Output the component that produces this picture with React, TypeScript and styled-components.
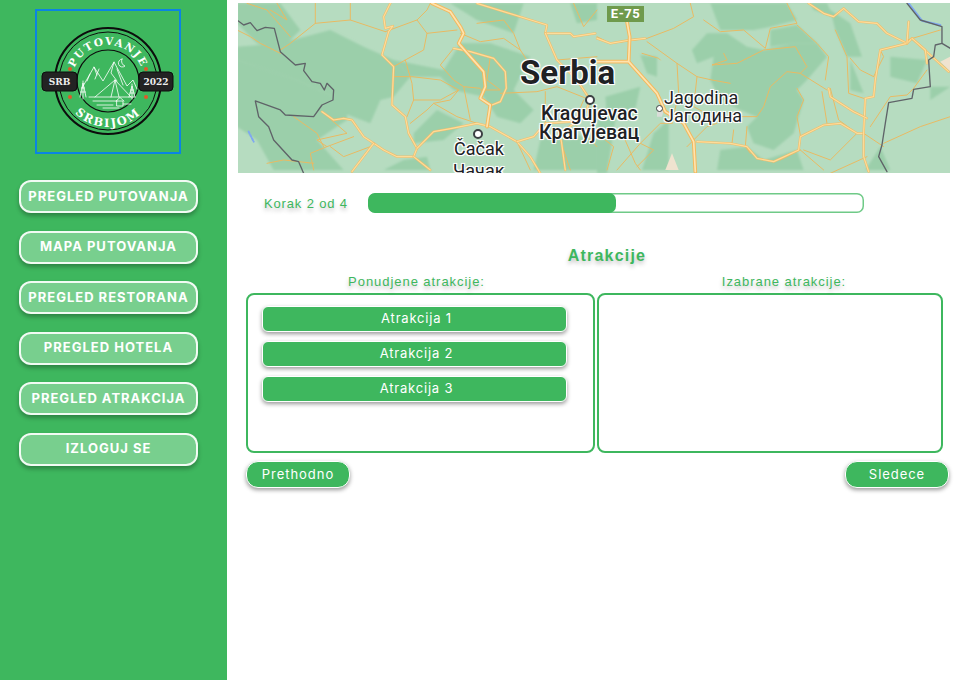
import React from "react";
import styled, { createGlobalStyle } from "styled-components";

const green = "#3eb75e";

const GlobalStyle = createGlobalStyle`
  html, body {
    margin: 0;
    padding: 0;
    background: #fff;
    font-family: Inter, "Liberation Sans", sans-serif;
  }
  * { box-sizing: border-box; }
`;

const Page = styled.div`
  display: flex;
  width: 961px;
  height: 680px;
  overflow: hidden;
`;

const Sidebar = styled.aside`
  width: 227px;
  flex: none;
  background: ${green};
  display: flex;
  flex-direction: column;
  padding: 9px 0 0 19px;
`;

const LogoBox = styled.div`
  width: 146px;
  height: 145px;
  margin: 0 0 26px 16px;
  border: 2px solid #0b84e3;
  svg { display: block; margin: -2px; }
`;

const NavList = styled.nav`
  display: flex;
  flex-direction: column;
  gap: 17.6px;
`;

const NavButton = styled.button`
  width: 179px;
  height: 33px;
  padding: 0 0 2px;
  border: 2px solid rgba(255, 255, 255, 0.9);
  border-radius: 12px;
  background: #78cf8e;
  color: #fff;
  font-family: inherit;
  font-size: 13px;
  font-weight: 700;
  letter-spacing: 1px;
  box-shadow: 0 3px 4px rgba(0, 0, 0, 0.28);
`;

const Main = styled.main`
  flex: 1;
  display: flex;
  flex-direction: column;
  padding: 3px 11px 0;
`;

const MapFrame = styled.div`
  position: relative;
  width: 712px;
  height: 170px;
  overflow: hidden;
  background: #b6dcc0;
  svg { display: block; }
`;

const MapLabel = styled.span<{ $size: number; $weight?: number; $left: number; $top: number }>`
  position: absolute;
  left: ${(p) => p.$left}px;
  top: ${(p) => p.$top}px;
  font-family: Roboto, "Liberation Sans", sans-serif;
  font-size: ${(p) => p.$size}px;
  font-weight: ${(p) => p.$weight ?? 500};
  line-height: 1;
  color: #202124;
  white-space: nowrap;
  text-shadow: -1px -1px 0 #fff, 1px -1px 0 #fff, -1px 1px 0 #fff, 1px 1px 0 #fff, 0 0 3px #fff;
`;

const RoadSign = styled.span`
  position: absolute;
  left: 369px;
  top: 3px;
  width: 37px;
  height: 16px;
  background: #6f9a4c;
  color: #fff;
  font-family: Roboto, "Liberation Sans", sans-serif;
  font-size: 13px;
  font-weight: 700;
  line-height: 16px;
  letter-spacing: 0.5px;
  text-align: center;
`;

const MapPin = styled.i<{ $left: number; $top: number; $size?: number }>`
  position: absolute;
  left: ${(p) => p.$left}px;
  top: ${(p) => p.$top}px;
  width: ${(p) => p.$size ?? 10}px;
  height: ${(p) => p.$size ?? 10}px;
  border: ${(p) => ((p.$size ?? 10) < 8 ? 1 : 2)}px solid #3c4043;
  border-radius: 50%;
  background: #fff;
`;

const ProgressRow = styled.div`
  display: flex;
  align-items: center;
  height: 20px;
  margin-top: 20px;
  padding-left: 26px;
`;

const shadowedText = `
  color: ${green};
  font-family: "Liberation Sans", Arial, sans-serif;
  text-shadow: 0 3px 4px rgba(0, 0, 0, 0.25);
`;

const StepLabel = styled.span`
  ${shadowedText}
  width: 104px;
  font-size: 13px;
  letter-spacing: 0.85px;
  white-space: nowrap;
`;

const ProgressTrack = styled.div`
  width: 496px;
  height: 20px;
  border-radius: 7px;
  overflow: hidden;
  box-shadow: inset 0 0 0 1.5px #6fca87;
`;

const ProgressFill = styled.div`
  height: 100%;
  background: ${green};
  border-radius: 7px;
`;

const Title = styled.h2`
  ${shadowedText}
  margin: 33px 0 0;
  padding-left: 26px;
  font-size: 16px;
  line-height: 20px;
  font-weight: 700;
  letter-spacing: 1.2px;
  text-align: center;
`;

const Columns = styled.div`
  display: grid;
  grid-template-columns: 349px 346px;
  column-gap: 2px;
  margin: 7px 0 0 8px;
`;

const ColumnLabel = styled.div<{ $shift: number }>`
  ${shadowedText}
  font-size: 13px;
  line-height: 18px;
  letter-spacing: 0.95px;
  text-align: center;
  margin-bottom: 2px;
  transform: translateX(${(p) => p.$shift}px);
`;

const Panel = styled.div`
  height: 160px;
  border: 2px solid ${green};
  border-radius: 8px;
  padding: 11px 26px 0 14px;
  display: flex;
  flex-direction: column;
  gap: 9.5px;
`;

const AttractionButton = styled.button`
  height: 25.5px;
  flex: none;
  padding: 0 0 2px 4px;
  border: 1px solid #fff;
  border-radius: 6px;
  background: ${green};
  color: #fff;
  font-family: inherit;
  font-size: 13px;
  letter-spacing: 0.8px;
  box-shadow: 0 2px 4px rgba(0, 0, 0, 0.4);
`;

const Footer = styled.div`
  display: flex;
  justify-content: space-between;
  margin: 8px 1px 0 8px;
`;

const StepButton = styled.button`
  width: 104px;
  height: 27px;
  padding: 0 0 2px;
  border: 1px solid #fff;
  border-radius: 12px;
  background: ${green};
  color: #fff;
  font-family: inherit;
  font-size: 13px;
  letter-spacing: 0.95px;
  box-shadow: 0 2px 4px rgba(0, 0, 0, 0.4);
`;

const navItems = [
  "PREGLED PUTOVANJA",
  "MAPA PUTOVANJA",
  "PREGLED RESTORANA",
  "PREGLED HOTELA",
  "PREGLED ATRAKCIJA",
  "IZLOGUJ SE",
];

const attractions = ["Atrakcija 1", "Atrakcija 2", "Atrakcija 3"];

function Logo() {
  const serif = "'DejaVu Serif', 'Liberation Serif', serif";
  const cx = 73;
  const cy = 72;
  return (
    <svg width="146" height="145" viewBox="0 0 146 145">
      <defs>
        <path id="arcTop" d={`M ${cx - 36} ${cy} A 36 36 0 0 1 ${cx + 36} ${cy}`} />
        <path id="arcBottom" d={`M ${cx - 46} ${cy} A 46 46 0 0 0 ${cx + 46} ${cy}`} />
      </defs>
      <circle cx={cx} cy={cy} r="53" fill="none" stroke="#0c0c0c" strokeWidth="2" />
      <circle cx={cx} cy={cy} r="49" fill="none" stroke="#0c0c0c" strokeWidth="1" />
      <circle cx={cx} cy={cy} r="31" fill="none" stroke="#0c0c0c" strokeWidth="1.2" />
      <text fontFamily={serif} fontSize="10.5" fontWeight="700" fill="#fff" letterSpacing="1.6">
        <textPath href="#arcTop" startOffset="50%" textAnchor="middle">PUTOVANJE</textPath>
      </text>
      <text fontFamily={serif} fontSize="11.5" fontWeight="700" fill="#fff" letterSpacing="1.8">
        <textPath href="#arcBottom" startOffset="50%" textAnchor="middle">SRBIJOM</textPath>
      </text>
      {/* mountains */}
      <g fill="none" stroke="#fff" strokeWidth="0.8" strokeLinejoin="round" strokeLinecap="round">
        <path d="M47 79 L59 58 L68 72 L79 53 L92 77 L98 71 L102 80" />
        <path d="M59 58 L62 66 M64 60 L60 70 M79 53 L76 64 L82 72 M82 60 L88 76 M55 65 L52 72" />
        <path d="M60 88 L80 71 L96 88 M80 71 L76 88 M80 71 L84 88 M54 88 H100" />
        <path d="M58 92 H82 M88 95 H96 M62 96 H78 M68 99 H84" />
        <path d="M48 72 V90 M45 88 L48 74 L51 88 M45.500 83 H50.500 M46.500 79 H49.500" />
        <path d="M97 75 V90 M94 88 L97 77 L100 88 M95 84 H99 M95.500 81 H98.500" />
        <path d="M82 92 h6 v5 h-6 z M81 92 l4 -3.500 l4 3.500" />
        <path d="M87 50 a4 4 0 1 0 3 7 a5 5 0 0 1 -3 -7" />
      </g>
      <g fill="#e0592a">
        <circle cx="35" cy="60" r="2" />
        <circle cx="111" cy="60" r="2" />
        <circle cx="35" cy="88" r="2" />
        <circle cx="111" cy="88" r="2" />
      </g>
      <rect x="7" y="63" width="35" height="19" rx="4" fill="#232323" stroke="#0c0c0c" />
      <rect x="104" y="63" width="34" height="19" rx="4" fill="#232323" stroke="#0c0c0c" />
      <text x="24.500" y="76" textAnchor="middle" fontFamily={serif} fontSize="9" fontWeight="700" fill="#eee">SRB</text>
      <text x="121" y="76" textAnchor="middle" fontFamily={serif} fontSize="9" fontWeight="700" fill="#eee">2022</text>
    </svg>
  );
}

// map drawing, coordinates taken at 3x, so each group is scaled back down
const forest2 = [
  "M0 10 H130 L190 90 L130 150 L60 130 L0 70 Z",
  "M130 130 L280 90 L380 140 L470 180 L520 230 L470 290 L430 300 L400 370 L320 340 L290 290 L180 240 L60 200 L0 180 V140 Z",
  "M0 180 L180 240 L290 290 L330 300 L330 360 L240 420 L320 510 H110 L60 420 L0 380 Z",
  "M470 180 L620 210 L670 130 L760 130 L880 170 L830 270 L890 330 L850 370 L780 350 L740 290 L650 270 L610 230 L520 230 Z",
  "M530 400 L600 330 L680 370 L620 420 L530 430 Z",
  "M640 10 H860 L830 100 L720 60 Z",
  "M440 510 L500 480 L570 470 L580 510 Z",
  "M890 510 L910 420 L1000 400 L1080 420 V510 Z",
  "M1000 10 H1080 V60 L1020 70 Z",
];

const forest3 = [
  "M0 350 L60 330 L30 520 H0 Z",
  "M25 290 L130 260 L110 350 L30 350 Z",
  "M130 165 L180 170 L180 230 L150 220 Z",
  "M135 510 L170 400 L215 360 L215 510 Z",
  "M360 510 L370 450 L450 440 L500 480 L600 450 L620 510 Z",
  "M285 150 L330 100 L390 100 L450 140 L500 150 L590 130 L660 130 L690 170 L630 240 L600 270 L620 300 L590 400 L530 450 L470 430 L450 380 L480 350 L430 330 L370 300 L340 240 L350 170 L300 190 Z",
  "M340 10 H570 L600 60 L520 80 L470 90 L440 90 L370 90 Z",
  "M520 90 L600 75 L660 130 L590 130 L520 140 Z",
  "M700 30 L760 70 L795 170 L750 170 L715 90 Z",
  "M640 10 H690 L710 50 L650 30 Z",
  "M760 180 L780 230 L800 280 L760 270 Z",
  "M880 170 L990 180 L960 250 L880 230 Z",
  "M805 510 L850 440 L880 510 Z",
  "M1000 260 L1060 260 L1000 300 Z",
];

const thin2 = [
  "M235 10 V70 L160 130 L130 150 M235 70 L340 60 L445 95",
  "M340 10 V60 M30 10 L90 30 L160 110 M100 30 L150 60 L120 10",
  "M445 95 L540 60 L570 100 L660 90 M540 60 L570 30 L580 10 M570 100 L560 150 L505 180 L470 200",
  "M505 180 L525 250 L530 300 L510 350 M470 230 L525 230 L610 240 L665 270 L610 300 L530 300",
  "M650 145 L610 195 L650 240 L680 260 L730 265 M665 270 L640 300 L590 310 L570 330 L520 370",
  "M590 310 L660 350 L720 370 M680 260 L700 360 M700 155 L760 170 L750 240 L790 270 L730 270",
  "M670 100 L730 125 L800 115 L850 150 L870 180 M720 70 L800 60 L830 100 L850 150",
  "M790 280 L900 275 L960 260 L1060 300 M925 275 V370 M960 180 L1080 170",
  "M0 90 L40 110 L70 130 L130 160 M260 340 L330 400 L240 420 L270 440 L350 410 M270 440 L220 460 L230 510",
  "M90 490 L140 480 L230 490 M170 350 L240 400 L260 440 M280 440 L320 470 L400 440",
  "M840 425 L880 510 M960 390 L1000 510 M1010 10 L1040 80 L1080 30 M1040 300 L1010 370 L1080 440",
];

const mid2 = [
  "M460 10 L440 50 L445 85 L468 78 L455 95 L435 165 L470 200 L465 315 L505 350 L515 400 L540 445 L530 470 L480 470 L440 450 L410 430 L380 410 L345 360 L320 355 L290 360 L255 335",
  "M345 515 L410 430",
  "M540 445 L590 395 L645 385 L720 370 L760 380 L840 425 L880 470 L910 520",
  "M530 470 L580 510",
  "M840 425 L890 410 L925 370 L1010 365",
  "M720 10 L930 75 L925 100 L1000 100 L1010 110 L1075 100",
  "M925 100 L960 180 L1020 240 L1060 300 L1040 350 L970 400 L985 510",
  "M650 145 L700 155 L770 175 L805 215 L808 265 L790 305 L765 315",
];

const major2 = "M585 10 L640 35 L670 80 L680 100 L665 130 L700 170 L740 215 L745 260 L730 295 L760 315 L750 380";

const thin3 = [
  "M0 110 L40 130 L150 115 L230 85 L290 50 L280 10 M150 125 L240 190 L300 230 L345 240 L400 250",
  "M135 160 L185 175 L190 180 M240 190 L245 280 L225 370 M300 230 L290 320 L345 350 L480 350 L500 320 L520 260 L570 215 L610 220 L690 270",
  "M570 10 L600 70 L520 85 L505 145 L440 90 L370 95 L320 60 M600 75 L660 130 L695 170 L685 240",
  "M610 220 L630 200 L595 140 L500 150 L420 190 L345 195 L390 180 L380 160 M600 265 L620 300 L600 350 L610 405",
  "M675 275 L690 370 M700 265 L725 360 L780 400 M715 90 L750 170 L755 280 L800 295 M760 175 L790 210 L830 230",
  "M850 150 L860 170 L830 230 M930 120 L1030 90 M990 210 L950 265 L930 285 L880 290 L820 380",
  "M860 430 L970 380 L1060 350 M800 400 L860 440 M610 450 L680 510 M610 450 L550 480 M780 400 L700 480 L620 450",
  "M225 370 L190 370 L130 430 L60 510 M130 430 L170 450 L120 500 M80 410 L115 490 L130 510 M0 400 L50 440 L30 510",
  "M270 440 L330 380 L360 370 M410 390 L405 430 M450 380 L445 440 L460 460 M810 470 L700 520",
];

const mid3 = [
  "M300 425 L400 430 L450 440 L480 475 L530 485 L605 450 L610 410 L680 375 L730 370 L780 400 L800 400",
  "M635 10 L680 40 L710 50 L740 25 L785 65 L840 70 L870 100 L930 130 L945 115 L1055 215",
  "M930 130 L850 150 L835 240 L830 290 L805 295 L800 400 L800 470 L815 515",
  "M930 130 L935 65 M945 115 L985 150 L990 190",
  "M695 265 L700 290 L770 335 L810 355",
  "M0 115 L40 130 L100 120 L145 115",
];

const major3 = "M90 65 L98 110 L95 185 L180 280 L205 335 L260 370 L290 425 L295 515 M0 185 L40 185 L95 185";

const border2 = [
  "M0 60 L20 75 L40 68 L60 92 L85 82 L112 85 L130 155 L175 195 L205 190 L200 212 L225 245 L250 250 L262 270 L270 250 L290 270 L288 300 L255 315 L230 350 L145 345 L130 330 L55 303 L65 350 L95 380 L110 420 L165 480 L185 485 L200 520",
];

const border3 = [
  "M930 10 L970 60 L1035 80 L1035 130 L1015 135 L1010 170 L995 180 L1000 260 L950 268 L945 295 L875 308 L865 370 L855 435 L845 470 L870 515",
  "M1035 130 L1060 145",
];

function MapArt() {
  return (
    <svg width="712" height="170" viewBox="0 0 712 170">
      <defs>
        <filter id="soft" x="-10%" y="-10%" width="120%" height="120%">
          <feGaussianBlur stdDeviation="1.3" />
        </filter>
      </defs>
      <rect width="712" height="170" fill="#b6dcc0" />
      <g filter="url(#soft)">
        <g transform="translate(-1 -3) scale(0.3333)">
          {forest2.map((d) => <path key={d} d={d} fill="#9bcfaa" />)}
        </g>
        <g transform="translate(359 -3) scale(0.3333)">
          {forest3.map((d) => <path key={d} d={d} fill="#9bcfaa" />)}
        </g>
      </g>
      <g transform="translate(-1 -3) scale(0.3333)" fill="none" strokeLinejoin="round" strokeLinecap="round">
        {thin2.map((d) => <path key={d} d={d} stroke="#e9ba62" strokeWidth="3" />)}
        {mid2.map((d) => (
          <g key={d}>
            <path d={d} stroke="#edbe6c" strokeWidth="7" />
            <path d={d} stroke="#ffdc9a" strokeWidth="3.500" />
          </g>
        ))}
        <path d={major2} stroke="#f3b95e" strokeWidth="11" />
        <path d={major2} stroke="#ffe3ad" strokeWidth="5" />
        {border2.map((d) => <path key={d} d={d} stroke="#5f6368" strokeWidth="4" />)}
        <path d="M35 395 L50 425" stroke="#7fa8f0" strokeWidth="6" strokeDasharray="6 5" />
      </g>
      <g transform="translate(359 -3) scale(0.3333)" fill="none" strokeLinejoin="round" strokeLinecap="round">
        <path d="M205 510 L225 460 L245 510 Z" fill="#efe3cf" />
        <path d="M1030 185 L1060 170 V215 Z" fill="#efe3cf" />
        <path d="M180 335 L200 330 L195 350 L180 350 Z" fill="#d9ddd8" />
        {thin3.map((d) => <path key={d} d={d} stroke="#e9ba62" strokeWidth="3" />)}
        {mid3.map((d) => (
          <g key={d}>
            <path d={d} stroke="#edbe6c" strokeWidth="7" />
            <path d={d} stroke="#ffdc9a" strokeWidth="3.500" />
          </g>
        ))}
        <path d={major3} stroke="#f3b95e" strokeWidth="11" />
        <path d={major3} stroke="#ffe3ad" strokeWidth="5" />
        <path d="M935 10 L975 62 L1030 75" stroke="#7fa8f0" strokeWidth="6" />
        {border3.map((d) => <path key={d} d={d} stroke="#5f6368" strokeWidth="4" />)}
      </g>
    </svg>
  );
}

export default function App() {
  return (
    <>
      <GlobalStyle />
      <Page>
        <Sidebar>
          <LogoBox>
            <Logo />
          </LogoBox>
          <NavList>
            {navItems.map((item) => (
              <NavButton key={item}>{item}</NavButton>
            ))}
          </NavList>
        </Sidebar>
        <Main>
          <MapFrame>
            <MapArt />
            <RoadSign>E-75</RoadSign>
            <MapLabel $left={282} $top={53} $size={33} $weight={700}>Serbia</MapLabel>
            <MapPin $left={347} $top={92} />
            <MapLabel $left={303} $top={101} $size={19.5}>Kragujevac</MapLabel>
            <MapLabel $left={301} $top={120} $size={19.5}>Крагујевац</MapLabel>
            <MapPin $left={235} $top={126} />
            <MapPin $left={418} $top={102} $size={7} />
            <MapLabel $left={216} $top={137} $size={18} $weight={400}>Čačak</MapLabel>
            <MapLabel $left={215} $top={159} $size={18} $weight={400}>Чачак</MapLabel>
            <MapLabel $left={426} $top={86} $size={18} $weight={400}>Jagodina</MapLabel>
            <MapLabel $left={426} $top={104} $size={18} $weight={400}>Јагодина</MapLabel>
          </MapFrame>
          <ProgressRow>
            <StepLabel>Korak 2 od 4</StepLabel>
            <ProgressTrack>
              <ProgressFill style={{ width: `${(2 / 4) * 100}%` }} />
            </ProgressTrack>
          </ProgressRow>
          <Title>Atrakcije</Title>
          <Columns>
            <div>
              <ColumnLabel $shift={-4}>Ponudjene atrakcije:</ColumnLabel>
              <Panel>
                {attractions.map((a) => (
                  <AttractionButton key={a}>{a}</AttractionButton>
                ))}
              </Panel>
            </div>
            <div>
              <ColumnLabel $shift={14}>Izabrane atrakcije:</ColumnLabel>
              <Panel />
            </div>
          </Columns>
          <Footer>
            <StepButton>Prethodno</StepButton>
            <StepButton>Sledece</StepButton>
          </Footer>
        </Main>
      </Page>
    </>
  );
}
